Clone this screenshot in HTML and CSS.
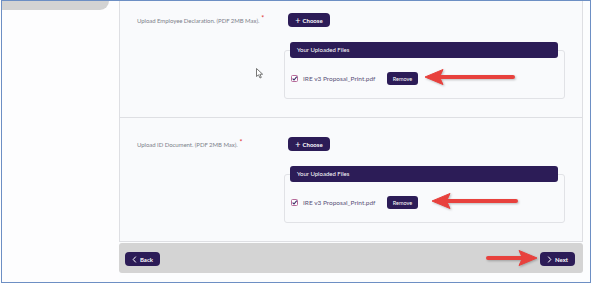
FILE: index.html
```html
<!DOCTYPE html>
<html lang="en">
<head>
  <meta charset="UTF-8">
  <title>Upload Documents</title>
  <link rel="stylesheet" href="styles.css">
</head>
<body>

  <div class="frame">
    <aside class="side">
      <div class="side-tab"></div>
    </aside>

    <main class="main">
      <section class="panel panel-cut">
        <label class="field-label">Upload Employee Declaration. (PDF 2MB Max).<span class="req">*</span></label>
        <div class="upload">
          <button class="btn btn-choose"><span class="plus">+</span> Choose</button>
          <div class="files">
            <div class="files-head">Your Uploaded Files</div>
            <div class="file-row">
              <svg class="check" width="7" height="7" viewBox="0 0 7 7"><rect x="0.5" y="0.5" width="6" height="6" rx="1" fill="#fff" stroke="#b76a9a"/><path d="M1.6 3.6 L3 5 L5.8 1.6" fill="none" stroke="#3a2a66" stroke-width="1.1"/></svg>
              <span class="file-name">IRE v3 Proposal_Print.pdf</span>
              <button class="btn btn-remove">Remove</button>
              <svg class="arrow arrow-a" width="92" height="18" viewBox="0 0 92 18"><path d="M1 9 L19 1.5 L15.5 9 L19 16.5 Z" fill="#e8413d" stroke="#e8413d" stroke-linejoin="round"/><line x1="15" y1="9" x2="89" y2="9" stroke="#e8413d" stroke-width="4" stroke-linecap="round"/></svg>
            </div>
          </div>
        </div>
        <svg class="cursor" width="8" height="11" viewBox="0 0 8 11"><path d="M0.5 0.5 L0.5 8.5 L2.5 6.8 L4 10 L5.3 9.4 L3.9 6.3 L6.6 6.2 Z" fill="#fff" stroke="#555" stroke-width="0.8"/></svg>
      </section>

      <section class="panel">
        <label class="field-label">Upload ID Document. (PDF 2MB Max).<span class="req">*</span></label>
        <div class="upload">
          <button class="btn btn-choose"><span class="plus">+</span> Choose</button>
          <div class="files">
            <div class="files-head">Your Uploaded Files</div>
            <div class="file-row">
              <svg class="check" width="7" height="7" viewBox="0 0 7 7"><rect x="0.5" y="0.5" width="6" height="6" rx="1" fill="#fff" stroke="#b76a9a"/><path d="M1.6 3.6 L3 5 L5.8 1.6" fill="none" stroke="#3a2a66" stroke-width="1.1"/></svg>
              <span class="file-name">IRE v3 Proposal_Print.pdf</span>
              <button class="btn btn-remove">Remove</button>
              <svg class="arrow arrow-b" width="88" height="18" viewBox="0 0 88 18"><path d="M1 9 L19 1.5 L15.5 9 L19 16.5 Z" fill="#e8413d" stroke="#e8413d" stroke-linejoin="round"/><line x1="15" y1="9" x2="85" y2="9" stroke="#e8413d" stroke-width="4" stroke-linecap="round"/></svg>
            </div>
          </div>
        </div>
      </section>

      <div class="footer">
        <button class="btn btn-nav">
          <svg width="5" height="7" viewBox="0 0 5 7"><path d="M3.8 0.6 L1.2 3.5 L3.8 6.4" fill="none" stroke="#fff" stroke-width="1"/></svg>
          Back
        </button>
        <svg class="arrow-next" width="54" height="18" viewBox="0 0 54 18"><line x1="3" y1="9" x2="38" y2="9" stroke="#e8413d" stroke-width="4" stroke-linecap="round"/><path d="M52 9 L34 1.5 L37.5 9 L34 16.5 Z" fill="#e8413d" stroke="#e8413d" stroke-linejoin="round"/></svg>
        <button class="btn btn-nav">
          <svg width="5" height="7" viewBox="0 0 5 7"><path d="M1.2 0.6 L3.8 3.5 L1.2 6.4" fill="none" stroke="#fff" stroke-width="1"/></svg>
          Next
        </button>
      </div>
    </main>
  </div>

</body>
</html>
```

FILE: styles.css
```css
body, html { margin:0; padding:0; background:#fff; font-family: Lato, "Liberation Sans", sans-serif; }
.frame { margin-left:1px; width:588px; height:281px; border:1px solid #6d8fc4; display:flex; overflow:hidden; background:#fcfdfe; }

.side { width:117px; flex:none; background:#fdfdfe; }
.side-tab { width:107px; height:9px; background:#d3d3d3; border-bottom-right-radius:10px; }

.main { width:464px; flex:none; display:flex; flex-direction:column; }

.panel { position:relative; box-sizing:border-box; height:124px; display:grid; grid-template-columns:147px 281px; padding:19px 0 0 17px; background:#f9fafc; border:1px solid #dedfe3; border-top:none; }
.panel-cut { margin-top:-7px; }

.field-label { font-size:6px; color:#7d818b; padding-top:3px; letter-spacing:-0.05px; }
.req { color:#e03535; font-size:7px; position:relative; top:-2px; margin-left:2px; }

.btn { border:none; background:#2c1c57; color:#fff; font-family:inherit; cursor:pointer; padding:0; display:flex; align-items:center; justify-content:center; }
.btn-choose { margin-left:4px; width:42px; height:14px; border-radius:4px; font-size:6px; font-weight:700; gap:2px; }
.plus { font-size:9px; font-weight:400; line-height:1; }

.files { margin-top:23px; border:1px solid #e1e2e6; border-radius:3px; padding-bottom:13px; }
.files-head { margin:-9px 6px 0 5px; height:16px; line-height:16px; background:#2c1c57; color:#fff; font-size:6px; padding-left:7px; border-radius:3px; }

.file-row { position:relative; display:flex; align-items:center; margin-top:14px; padding-left:6px; height:13px; }
.check { flex:none; }
.file-name { margin-left:5px; width:76px; font-size:6.5px; color:#5a5278; white-space:nowrap; }
.btn-remove { margin-left:8px; width:31px; height:13px; border-radius:3px; font-size:5.5px; }

.arrow { position:absolute; top:-4px; filter:drop-shadow(1px 1px 1px rgba(0,0,0,0.25)); }
.arrow-a { left:139px; }
.arrow-b { left:146px; }

.cursor { position:absolute; left:136px; top:74px; }

.footer { position:relative; margin-top:1px; height:30px; background:#d4d4d4; border-radius:3px; display:flex; justify-content:space-between; align-items:center; padding:2px 8px 0 6px; box-sizing:border-box; }
.btn-nav { width:35px; height:14px; border-radius:4px; font-size:6px; font-weight:700; gap:3px; }
.footer .btn-nav:last-child { width:35px; }
.arrow-next { position:absolute; left:366px; top:6px; filter:drop-shadow(1px 1px 1px rgba(0,0,0,0.25)); }
```
